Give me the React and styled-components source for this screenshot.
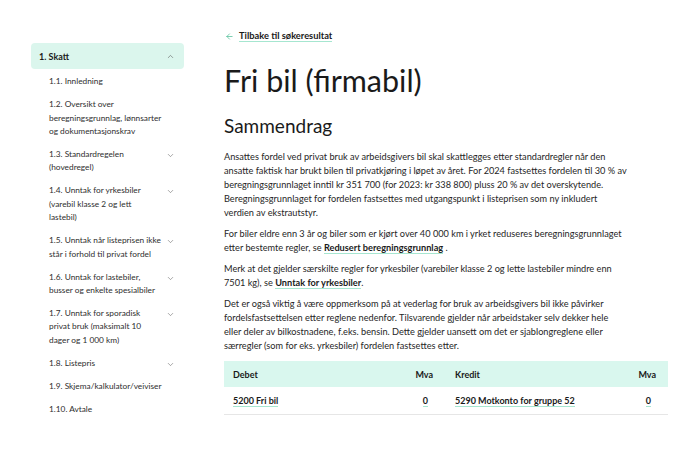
import { Fragment } from "react";
import styled, { createGlobalStyle } from "styled-components";
import { ArrowLeft, ChevronDown, ChevronUp } from "lucide-react";

const GlobalStyle = createGlobalStyle`
  html, body {
    margin: 0;
    padding: 0;
    background: #ffffff;
  }
  body {
    font-family: "Lato", "Noto Sans", sans-serif;
    color: #1c1c1c;
  }
  * {
    box-sizing: border-box;
  }
`;

// lines are kept as in the source layout so the wrapping stays the same
const subItems = [
  { lines: ["1.1. Innledning"] },
  { lines: ["1.2. Oversikt over", "beregningsgrunnlag, lønnsarter", "og dokumentasjonskrav"] },
  { lines: ["1.3. Standardregelen", "(hovedregel)"], more: true },
  { lines: ["1.4. Unntak for yrkesbiler", "(varebil klasse 2 og lett", "lastebil)"], more: true },
  { lines: ["1.5. Unntak når listeprisen ikke", "står i forhold til privat fordel"], more: true },
  { lines: ["1.6. Unntak for lastebiler,", "busser og enkelte spesialbiler"], more: true },
  { lines: ["1.7. Unntak for sporadisk", "privat bruk (maksimalt 10", "dager og 1 000 km)"], more: true },
  { lines: ["1.8. Listepris"], more: true },
  { lines: ["1.9. Skjema/kalkulator/veiviser"] },
  { lines: ["1.10. Avtale"] },
];

function Lines({ lines }) {
  return lines.map((line, i) => (
    <Fragment key={i}>
      {i > 0 && <br />}
      {line}
    </Fragment>
  ));
}

export default function App() {
  return (
    <>
      <GlobalStyle />
      <Page>
        <Sidebar>
          <Section>
            <span>1. Skatt</span>
            <ChevronUp size={9} strokeWidth={1.5} color="#555" />
          </Section>
          <SubList>
            {subItems.map((item) => (
              <SubItem key={item.lines[0]}>
                <SubLabel>
                  <Lines lines={item.lines} />
                </SubLabel>
                <Chevron>{item.more && <ChevronDown size={9} strokeWidth={1.5} color="#666" />}</Chevron>
              </SubItem>
            ))}
          </SubList>
        </Sidebar>

        <Main>
          <BackLink>
            <ArrowLeft size={9} strokeWidth={1.8} color="#3db88c" />
            <span>Tilbake til søkeresultat</span>
          </BackLink>
          <Title>Fri bil (firmabil)</Title>
          <Heading>Sammendrag</Heading>

          <Paragraph>
            Ansattes fordel ved privat bruk av arbeidsgivers bil skal skattlegges etter standardregler når den
            <br />
            ansatte faktisk har brukt bilen til privatkjøring i løpet av året. For 2024 fastsettes fordelen til 30 % av
            <br />
            beregningsgrunnlaget inntil kr 351 700 (for 2023: kr 338 800) pluss 20 % av det overskytende.
            <br />
            Beregningsgrunnlaget for fordelen fastsettes med utgangspunkt i listeprisen som ny inkludert
            <br />
            verdien av ekstrautstyr.
          </Paragraph>
          <Paragraph>
            For biler eldre enn 3 år og biler som er kjørt over 40 000 km i yrket reduseres beregningsgrunnlaget
            <br />
            etter bestemte regler, se <TextLink>Redusert beregningsgrunnlag</TextLink> .
          </Paragraph>
          <Paragraph>
            Merk at det gjelder særskilte regler for yrkesbiler (varebiler klasse 2 og lette lastebiler mindre enn
            <br />
            7501 kg), se <TextLink>Unntak for yrkesbiler</TextLink>.
          </Paragraph>
          <Paragraph>
            Det er også viktig å være oppmerksom på at vederlag for bruk av arbeidsgivers bil ikke påvirker
            <br />
            fordelsfastsettelsen etter reglene nedenfor. Tilsvarende gjelder når arbeidstaker selv dekker hele
            <br />
            eller deler av bilkostnadene, f.eks. bensin. Dette gjelder uansett om det er sjablongreglene eller
            <br />
            særregler (som for eks. yrkesbiler) fordelen fastsettes etter.
          </Paragraph>

          <Table>
            <colgroup>
              <col style={{ width: 166 }} />
              <col style={{ width: 55 }} />
              <col style={{ width: 165 }} />
              <col style={{ width: 58 }} />
            </colgroup>
            <thead>
              <tr>
                <Th>Debet</Th>
                <Th $num>Mva</Th>
                <Th $wide>Kredit</Th>
                <Th $num>Mva</Th>
              </tr>
            </thead>
            <tbody>
              <tr>
                <Td>
                  <TextLink>5200 Fri bil</TextLink>
                </Td>
                <Td $num>
                  <TextLink>0</TextLink>
                </Td>
                <Td $wide>
                  <TextLink>5290 Motkonto for gruppe 52</TextLink>
                </Td>
                <Td $num>
                  <TextLink>0</TextLink>
                </Td>
              </tr>
            </tbody>
          </Table>
        </Main>
      </Page>
    </>
  );
}

const Page = styled.div`
  display: flex;
  align-items: flex-start;
  gap: 40px;
  padding: 31px 0 0 31px;
  width: 700px;
  height: 450px;
  overflow: hidden;
`;

const Sidebar = styled.nav`
  width: 153px;
  flex-shrink: 0;
  padding-top: 12px;
`;

const Section = styled.div`
  display: flex;
  align-items: center;
  justify-content: space-between;
  height: 26px;
  padding: 0 9px 0 8px;
  background: #dbf6ed;
  border-radius: 4px;
  font-size: 9px;
  font-weight: 700;
  color: #1a1a1a;
`;

const SubList = styled.ul`
  list-style: none;
  margin: 1.5px 0 0;
  padding: 0 0 0 18px;
`;

const SubItem = styled.li`
  display: flex;
  align-items: flex-start;
  padding: 4.7px 0;
`;

const SubLabel = styled.span`
  width: 117px;
  font-size: 8.3px;
  line-height: 13.5px;
  white-space: nowrap;
  color: #2e2e2e;
`;

const Chevron = styled.span`
  display: flex;
  width: 9px;
  padding-top: 3px;
`;

const Main = styled.main`
  width: 444px;
  display: flex;
  flex-direction: column;
  align-items: flex-start;
`;

const BackLink = styled.a`
  display: flex;
  align-items: center;
  gap: 5px;
  height: 10px;
  font-size: 9.3px;
  font-weight: 700;
  color: #1a1a1a;
  margin-left: 1px;

  span {
    border-bottom: 1px solid #a6e6d0;
    line-height: 11px;
  }
`;

const Title = styled.h1`
  margin: 19px 0 0;
  font-size: 30.5px;
  font-weight: 400;
  line-height: 40px;
  color: #1a1a1a;
`;

const Heading = styled.h2`
  margin: 14px 0 12px;
  font-size: 19px;
  font-weight: 400;
  line-height: 24px;
  color: #1a1a1a;
`;

const Paragraph = styled.p`
  width: 444px;
  margin: 0 0 7px;
  font-size: 9.2px;
  line-height: 14px;
  white-space: nowrap;
  color: #262626;
`;

const TextLink = styled.a`
  font-weight: 700;
  color: #1a1a1a;
  border-bottom: 1px solid #a6e6d0;
`;

const Table = styled.table`
  width: 444px;
  margin-top: 1px;
  border-collapse: collapse;
  table-layout: fixed;
  font-size: 9px;

  thead tr {
    background: #d9f7ee;
  }
  tbody tr {
    border-bottom: 1px solid #e6e6e6;
  }
`;

const Th = styled.th`
  height: 26px;
  padding: 0 ${(p) => (p.$num ? "12px" : "4px")} 0 ${(p) => (p.$wide ? "10px" : "9px")};
  text-align: ${(p) => (p.$num ? "right" : "left")};
  font-weight: 700;
  color: #1a1a1a;
`;

const Td = styled.td`
  height: 27px;
  padding: 0 ${(p) => (p.$num ? "17px" : "4px")} 0 ${(p) => (p.$wide ? "10px" : "9px")};
  text-align: ${(p) => (p.$num ? "right" : "left")};
`;
